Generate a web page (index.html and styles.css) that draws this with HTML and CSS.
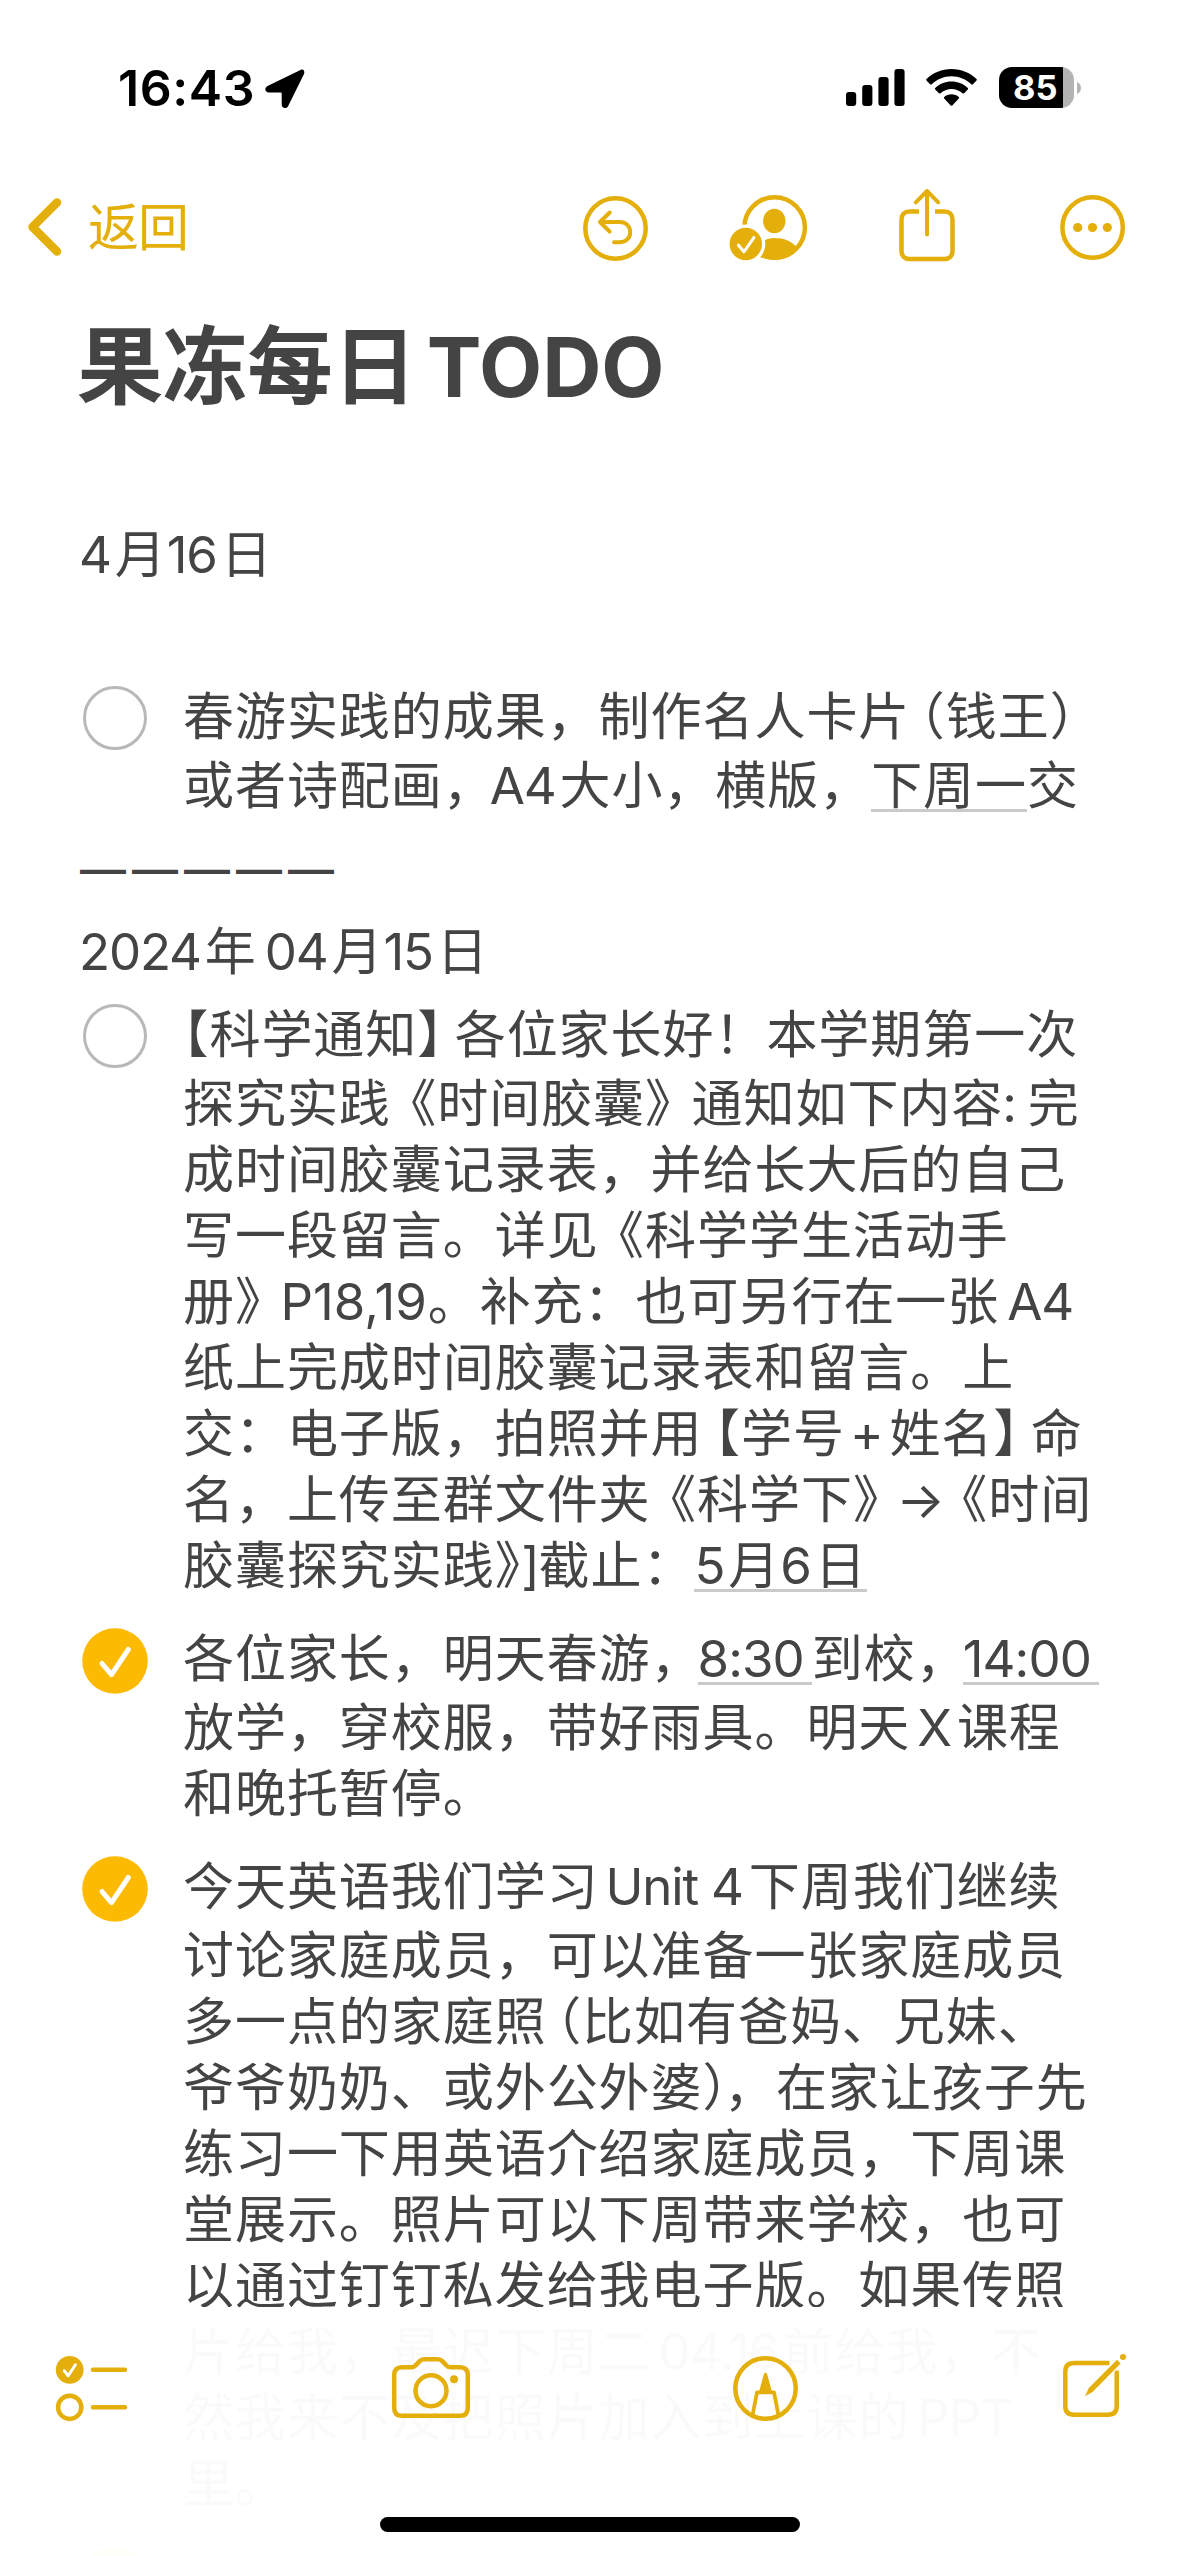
FILE: index.html
```html
<!DOCTYPE html>
<html lang="zh-CN">
<head>
<meta charset="utf-8">
<title>果冻每日TODO</title>
<link rel="stylesheet" href="styles.css">
</head>
<body>
<div class="screen">
  <header class="status">
    <div class="status-left">
      <span class="time">16:43</span>
      <svg class="location" width="40" height="40" viewBox="0 0 40 40"><path d="M36 .8 2.500 17c-3.500 1.800-2.500 6.500 1.500 6.500H15.500c.8 0 1.200.4 1.200 1.200V35.500c0 4 5 4.800 6.500 1.500L39 5C40 2.200 38.500-.4 36 .8Z"/></svg>
    </div>
    <div class="status-right">
      <svg class="signal" width="59" height="37" viewBox="0 0 59 37"><rect x="0" y="23" width="10.200" height="14" rx="3"/><rect x="16.200" y="16" width="10.200" height="21" rx="3"/><rect x="32.400" y="8" width="10.200" height="29" rx="3"/><rect x="48.400" y="0" width="10.200" height="37" rx="3"/></svg>
      <svg class="wifi" width="51" height="37" viewBox="0 0 51 37"><path d="M25.500 0C35.200 0 44 3.700 50.500 10c.5.5.5 1.100 0 1.600l-3.600 3.700c-.5.5-1.100.5-1.600 0C40.100 10.300 33.200 7.300 25.500 7.300S10.900 10.300 5.700 15.300c-.5.5-1.100.5-1.600 0L.5 11.600c-.5-.5-.5-1.100 0-1.600C7 3.700 15.800 0 25.500 0Z"/><path d="M25.500 12.500c6.300 0 12 2.400 16.300 6.400.5.500.5 1.100 0 1.600l-3.700 3.700c-.5.5-1.100.5-1.600 0-2.900-2.700-6.800-4.300-11-4.300s-8.100 1.600-11 4.300c-.5.500-1.100.5-1.600 0l-3.700-3.700c-.5-.5-.5-1.100 0-1.600 4.300-4 10-6.400 16.300-6.400Z"/><path d="M25.500 25.300c2.800 0 5.300 1 7.300 2.700.5.500.5 1.100 0 1.600l-6.500 6.800c-.5.5-1.100.5-1.600 0l-6.500-6.800c-.5-.5-.5-1.100 0-1.600 2-1.700 4.500-2.700 7.300-2.700Z"/></svg>
      <div class="battery"><span class="battery-level">85</span></div>
      <svg class="battery-cap" width="4" height="12" viewBox="0 0 4 12"><path d="M0 0c2.400 1 4 3.300 4 6s-1.600 5-4 6Z"/></svg>
    </div>
  </header>

  <nav class="nav">
    <a class="back">
      <svg width="34" height="58" viewBox="0 0 34 58"><path d="M29 4.500 4.500 29 29 53.500" fill="none" stroke="currentColor" stroke-width="8.500" stroke-linecap="round" stroke-linejoin="round"/></svg>
      <span>返回</span>
    </a>
    <div class="actions">
      <svg width="66" height="74" viewBox="583 190 66 74" class="line-icon"><circle cx="615.500" cy="228.500" r="30.200"/><path d="M609.700 212.500 600 222l9.700 9.700M600 222h19.500c6.500 0 10.700 4.300 10.700 10.200s-4.200 10-10.700 10h-5.500" stroke-width="4"/></svg>
      <svg width="80" height="74" viewBox="729 190 80 74" class="line-icon person"><circle cx="774.600" cy="227.500" r="30.300"/><ellipse cx="774.300" cy="221" rx="11.200" ry="12.200" class="solid"/><path class="solid" d="M755 254c2-10 9-16 19.500-16 9.500 0 17.500 3 22.500 10a31 31 0 0 1-42 6Z"/><circle cx="745.800" cy="244" r="19.500" class="gap"/><circle cx="745.800" cy="244" r="16.200" class="solid"/><path class="tick" d="m738.500 245.200 5.400 6.600 10-14.200"/></svg>
      <svg width="58" height="76" viewBox="898 188 58 76" class="line-icon share"><path stroke-linecap="butt" d="M919 211.500h-9.500c-5 0-8 3-8 8V251c0 5 3 8 8 8h35c5 0 8-3 8-8v-31.500c0-5-3-8-8-8H935"/><path stroke-width="4" d="M927 191v43.500M915.800 202.300 927 191l11.200 11.300"/></svg>
      <svg width="66" height="74" viewBox="1060 190 66 74" class="line-icon"><circle cx="1092.600" cy="227.500" r="30.200"/><g class="solid"><circle cx="1077.700" cy="227.500" r="4.600"/><circle cx="1092.500" cy="227.500" r="4.600"/><circle cx="1107.300" cy="227.500" r="4.600"/></g></svg>
    </div>
  </nav>

  <main class="note">
    <h1>果冻每日<span class="en">TODO</span></h1>
    <p class="date first-date"><span class="en">4</span>月<span class="en tight">16</span>日</p>

    <section class="item item-first">
      <span class="check"></span>
      <div class="text">
        <p>春游实践的成果，制作名人卡片<span class="open-paren">（</span>钱王）</p>
        <p>或者诗配画<span class="comma">，</span><span class="en tight">A4</span>大小，横版，<u>下周一</u>交</p>
      </div>
    </section>

    <p class="dashes">—————</p>
    <p class="date"><span class="en">2024</span>年<span class="en">04</span>月<span class="en tight">15</span>日</p>

    <section class="item item-second">
      <span class="check"></span>
      <div class="text">
        <p><span class="half">【</span>科学通知<span class="close-bracket">】</span>各位家长好！本学期第一次</p>
        <p>探究实践<span class="open-title">《</span>时间胶囊<span class="close-title">》</span>通知如下内容<span class="en colon">:</span>完</p>
        <p>成时间胶囊记录表，并给长大后的自己</p>
        <p>写一段留言。详见<span class="open-title">《</span>科学学生活动手</p>
        <p>册<span class="close-title">》</span><span class="en pages">P18,19</span>。补充：也可另行在一张<span class="en">A4</span></p>
        <p>纸上完成时间胶囊记录表和留言。上</p>
        <p>交：电子版，拍照并用<span class="open-bracket">【</span>学号<span class="en plus">+</span>姓名<span class="close-bracket">】</span>命</p>
        <p>名，上传至群文件夹<span class="open-title">《</span>科学下<span class="close-title">》</span><span class="en arrow">→</span><span class="open-title">《</span>时间</p>
        <p>胶囊探究实践<span class="half">》</span><span class="en bracket">]</span>截止：<u><span class="en tight">5</span>月<span class="en tight">6</span>日</u></p>
      </div>
    </section>

    <section class="item">
      <svg class="check-done" width="66" height="66" viewBox="0 0 66 66"><circle cx="33" cy="33" r="32.800"/><path d="m20 35.500 9.500 11.200L46.300 21.500"/></svg>
      <div class="text">
        <p>各位家长，明天春游<span class="comma">，</span><u><span class="en clock">8:30</span></u>到校<span class="comma">，</span><u><span class="en clock">14:00</span></u></p>
        <p>放学，穿校服，带好雨具。明天<span class="en letter">X</span>课程</p>
        <p>和晚托暂停。</p>
      </div>
    </section>

    <section class="item">
      <svg class="check-done" width="66" height="66" viewBox="0 0 66 66"><circle cx="33" cy="33" r="32.800"/><path d="m20 35.500 9.500 11.200L46.300 21.500"/></svg>
      <div class="text">
        <p>今天英语我们学习<span class="en letter">Unit 4</span>下周我们继续</p>
        <p>讨论家庭成员，可以准备一张家庭成员</p>
        <p>多一点的家庭照<span class="open-paren">（</span>比如有爸妈、兄妹、</p>
        <p>爷爷奶奶、或外公外婆<span class="close-paren">）</span>，在家让孩子先</p>
        <p>练习一下用英语介绍家庭成员，下周课</p>
        <p>堂展示。照片可以下周带来学校，也可</p>
        <p>以通过钉钉私发给我电子版。如果传照</p>
        <p>片给我，最迟<u>下周二</u><span class="en">04.16</span>前给我，不</p>
        <p>然我来不及把照片加入到上课的<span class="en letter">PPT</span></p>
        <p>里。</p>
      </div>
    </section>

    <section class="item">
      <svg class="check-done" width="66" height="66" viewBox="0 0 66 66"><circle cx="33" cy="33" r="32.800"/><path d="m20 35.500 9.500 11.200L46.300 21.500"/></svg>
    </section>
  </main>

  <footer class="toolbar">
    <div class="tools">
      <svg width="74" height="72" viewBox="55 2353 74 72" class="line-icon"><circle cx="69.700" cy="2369.800" r="13.900" class="solid"/><path class="tick" d="m64.300 2370.800 3.900 5 7.200-11"/><circle cx="69.700" cy="2407.300" r="11.600"/><path d="M93 2369.800h32M93 2407.300h32"/></svg>
      <svg width="80" height="72" viewBox="391 2353 80 72" class="line-icon"><path d="M402 2367.200h9.500c2 0 3-.4 4.200-1.800l3.700-4c1.500-1.600 2.600-2.100 4.800-2.100h13.600c2.200 0 3.300.5 4.800 2.100l3.700 4c1.200 1.400 2.200 1.800 4.200 1.800h9.500c5 0 7.800 2.800 7.800 7.800v33c0 5-2.800 7.800-7.800 7.800h-58c-5 0-7.800-2.800-7.800-7.800v-33c0-5 2.800-7.800 7.800-7.800Z"/><circle cx="431" cy="2390.700" r="15.500"/><circle cx="454" cy="2379.200" r="4" class="solid"/></svg>
      <svg width="66" height="72" viewBox="732 2353 66 72" class="line-icon"><circle cx="764.500" cy="2388.500" r="30.200"/><path class="solid" d="m757.500 2393.700 5.200-19c.7-2.500 2.900-2.500 3.600 0l5.200 19Z"/><path stroke-width="3.800" d="m751.800 2414 4.200-21.700h17l4.200 21.700"/></svg>
      <svg width="68" height="72" viewBox="1061 2353 68 72" class="line-icon"><path stroke-linecap="butt" d="M1109.500 2363h-35.500c-5.700 0-8.700 3-8.700 8.700V2406c0 5.700 3 8.700 8.700 8.700h34c5.700 0 8.700-3 8.700-8.700v-35.500"/><path class="gap" d="m1090 2396 38-38-6-6-32 33Z"/><path class="solid" d="m1085 2396.200 3.800-8.200 28.200-28.300 3.700 3.700-28.200 28.500Z"/><circle class="solid" cx="1123" cy="2357" r="3"/></svg>
    </div>
    <div class="home-indicator"></div>
  </footer>
</div>
</body>
</html>
```
FILE: styles.css
```css
* {
  box-sizing: border-box;
}

body {
  margin: 0;
  background: #fff;
}

.screen {
  position: relative;
  display: flex;
  flex-direction: column;
  width: 1179px;
  height: 2556px;
  overflow: hidden;
  color: #444;
  font-family: "Inter", "Noto Sans CJK SC", sans-serif;
  font-size: 51px;
  line-height: 66px;
}

h1,
p {
  margin: 0;
}

/* Status bar */
.status {
  display: flex;
  flex: none;
  justify-content: space-between;
  height: 150px;
  padding: 55px 98px 0 118px;
  color: #000;
}

.status svg {
  fill: currentColor;
}

.status-left,
.status-right {
  display: flex;
  align-items: flex-start;
}

.time {
  width: 147px;
  font-size: 50px;
  font-weight: 600;
  letter-spacing: 0.6px;
}

.location {
  margin-top: 14px;
}

.signal,
.wifi {
  margin-top: 14px;
}

.wifi {
  margin-left: 21px;
}

.battery {
  width: 75px;
  height: 41px;
  margin-top: 12px;
  margin-left: 22px;
  padding-left: 14px;
  border-radius: 13px;
  background: linear-gradient(to right, #000 64px, #b3b3b3 64px);
}

.battery-level {
  display: block;
  color: #fff;
  font-size: 34.500px;
  font-weight: 700;
  line-height: 41px;
}

.status .battery-cap {
  margin-top: 27px;
  margin-left: 3px;
  fill: #b3b3b3;
}

/* Navigation */
.nav {
  display: flex;
  flex: none;
  justify-content: space-between;
  height: 167px;
  padding: 40px 53px 0 28px;
  color: #e4af0a;
}

.back {
  display: flex;
  align-items: flex-start;
  gap: 26px;
}

.back svg {
  margin-top: 8px;
}

.back span {
  margin-top: 5px;
  letter-spacing: -1px;
}

.actions {
  display: grid;
  grid-template-columns: 146px 169px 162px 66px;
}

.share {
  margin-top: -2px;
}

.line-icon {
  fill: none;
  stroke: currentColor;
  stroke-width: 4.500;
  stroke-linecap: round;
  stroke-linejoin: round;
}

.line-icon .solid {
  fill: currentColor;
  stroke: none;
}

.line-icon .gap {
  fill: #fff;
  stroke: none;
}

.line-icon .tick {
  stroke: #fff;
  stroke-width: 3;
}

/* Note */
.note {
  flex: none;
  padding-left: 79px;
  letter-spacing: 0.95px;
  text-spacing-trim: space-all;
  white-space: nowrap;
}

/* The Chinese face has no semibold, so the regular weight is thickened */
h1 {
  margin-left: -1px;
  font-size: 84px;
  font-weight: 500;
  line-height: 100px;
  -webkit-text-stroke: 2px #444;
}

h1 .en {
  margin-left: 9px;
  font-size: 82px;
  font-weight: 700;
  letter-spacing: 0;
  -webkit-text-stroke: 0;
}

.first-date {
  margin-top: 104px;
}

.dashes {
  margin-top: 17px;
  margin-bottom: 17px;
  padding-left: 1px;
  font-size: 46px;
  font-weight: 500;
  letter-spacing: 6px;
}

.item {
  display: flex;
  align-items: flex-start;
  margin-top: 27px;
}

.item-first {
  margin-top: 96px;
}

.item-second {
  margin-top: 17px;
}

.text {
  margin-left: 36px;
}

.text p:first-child {
  margin-bottom: 3px;
}

.check {
  width: 64px;
  height: 64px;
  margin: 2px 0 0 4px;
  border: 3px solid #b8b8b8;
  border-radius: 50%;
}

.check-done {
  margin: 2px -1px 0 3px;
  fill: #fdba02;
}

.check-done path {
  fill: none;
  stroke: #fff;
  stroke-width: 5;
  stroke-linecap: round;
  stroke-linejoin: round;
}

u {
  display: inline-block;
  height: 59px;
  text-decoration: none;
  border-bottom: 3px solid #cacaca;
}

/* Latin runs keep a hair of space on each side next to Chinese text */
.en {
  margin: 0 4px 0 8px;
  letter-spacing: -1.200px;
}

.date > .en:first-child {
  margin-left: 0;
}

.en.tight {
  margin-left: 0;
}

.en.letter {
  margin: 0 6px 0 7px;
}

.en.clock {
  margin: 0 8px 0 0;
  letter-spacing: -0.9px;
}

.en.pages {
  margin: 0 1px 0 -1px;
  letter-spacing: 0;
}

.en.plus {
  margin: 0 7px 0 5px;
}

.en.colon {
  margin: 0 12px 0 -1px;
}

.en.arrow {
  margin: 0 -2px 0 -3px;
}

.en.bracket {
  margin: 0;
}

/* Brackets use their half-width forms, with the space beside them set by hand */
.half,
.open-paren,
.close-paren,
.open-bracket,
.close-bracket,
.open-title,
.close-title {
  font-feature-settings: "halt";
}

.comma {
  margin-right: -5px;
}

.open-paren {
  margin-left: 9px;
}

.close-paren {
  margin-right: -5px;
}

.open-bracket {
  margin-left: 12px;
}

.close-bracket {
  margin-right: 11px;
}

.open-title {
  margin-left: 20px;
}

.close-title {
  margin-right: 20px;
}

/* Bottom toolbar */
.toolbar {
  position: absolute;
  right: 0;
  bottom: 0;
  left: 0;
  height: 249px;
  padding-top: 46px;
  background: rgba(255, 255, 255, 0.975);
  color: #e4af0a;
}

.tools {
  display: flex;
  justify-content: space-between;
  padding: 0 50px 0 55px;
}

.home-indicator {
  width: 420px;
  height: 15px;
  margin: 92px 0 0 380px;
  border-radius: 8px;
  background: #000;
}
```
